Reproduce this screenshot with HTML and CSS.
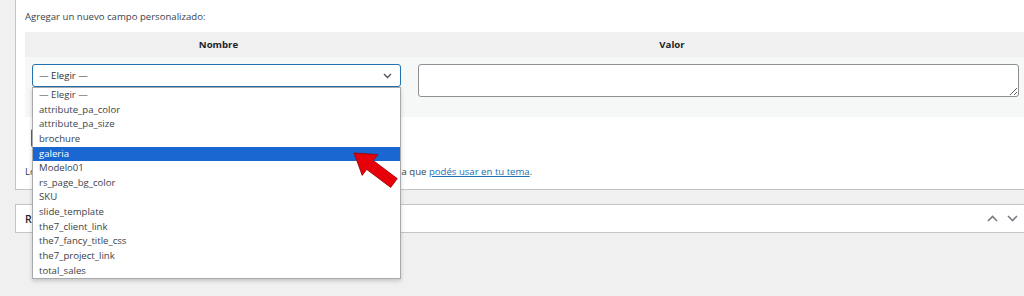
FILE: index.html
```html
<!DOCTYPE html>
<html lang="es">
<head>
<meta charset="utf-8">
<title>Campos personalizados</title>
<link rel="stylesheet" href="styles.css">
</head>
<body>
<div class="page">
  <div class="postbox custom-fields">
    <p class="add-label">Agregar un nuevo campo personalizado:</p>
    <div class="meta-table">
      <div class="meta-head">
        <div class="th th-name">Nombre</div>
        <div class="th th-value">Valor</div>
      </div>
      <div class="meta-row">
        <div class="select-wrap">
          <div class="select">
            <span>— Elegir —</span>
            <svg class="select-chevron" width="9" height="6" viewBox="0 0 9 6"><path d="M1 1l3.5 3.5L8 1" fill="none" stroke="#50575e" stroke-width="1.4"/></svg>
          </div>
          <ul class="options">
            <li>— Elegir —</li>
            <li>attribute_pa_color</li>
            <li>attribute_pa_size</li>
            <li>brochure</li>
            <li class="selected">galeria</li>
            <li>Modelo01</li>
            <li>rs_page_bg_color</li>
            <li>SKU</li>
            <li>slide_template</li>
            <li>the7_client_link</li>
            <li>the7_fancy_title_css</li>
            <li>the7_project_link</li>
            <li>total_sales</li>
          </ul>
        </div>
        <textarea class="value-input"></textarea>
      </div>
    </div>
    <button class="button">Agregar campo personalizado</button>
    <p class="help">Los campos personalizados pueden utilizarse para agregar metadatos a cada entrada que <a href="#">podés usar en tu tema</a>.</p>
  </div>
  <div class="postbox collapsed">
    <h2 class="box-title">Revisiones</h2>
    <div class="handles">
      <span class="handle"><svg width="11" height="7" viewBox="0 0 11 7"><path d="M1 6l4.5-4.5L10 6" fill="none" stroke="#787c82" stroke-width="1.6"/></svg></span>
      <span class="handle"><svg width="11" height="7" viewBox="0 0 11 7"><path d="M1 1l4.5 4.5L10 1" fill="none" stroke="#787c82" stroke-width="1.6"/></svg></span>
    </div>
  </div>
</div>
<svg class="annotation-arrow" width="1024" height="296" viewBox="0 0 1024 296">
  <polygon points="354,153 377.8,154.6 373.3,160.6 397.3,178.6 390.7,187.4 366.7,169.4 362.2,175.4" fill="#e5000a" stroke="#9c0000" stroke-width="0.8" stroke-linejoin="round"/>
</svg>
</body>
</html>
```

FILE: styles.css
```css
html, body {
  margin: 0;
  background: #f0f0f1;
  overflow: hidden;
}
body {
  position: relative;
  width: 1024px;
  height: 296px;
  font-family: "Open Sans", "Liberation Sans", sans-serif;
  font-size: 9.6px;
  color: #3c434a;
}
.page {
  padding-left: 15px;
}
.postbox {
  box-sizing: border-box;
  width: 1013px;
  background: #fff;
  border: 1px solid #c3c4c7;
}
.custom-fields {
  border-top: 0;
  height: 190px;
  padding: 10px 0 0 9px;
}
.add-label {
  margin: 0;
  line-height: 14px;
  color: #3c434a;
}
.meta-table {
  margin-top: 8px;
  background: #f6f7f7;
}
.meta-head {
  display: grid;
  grid-template-columns: 387px 520px;
  height: 25px;
  align-items: center;
  background: #f0f0f1;
}
.th {
  text-align: center;
  font-weight: 700;
  color: #1d2327;
}
.meta-row {
  display: grid;
  grid-template-columns: 387px 601px;
  align-items: start;
  padding: 7px 0 20px;
}
.select-wrap {
  position: relative;
  padding-left: 7px;
}
.select {
  box-sizing: border-box;
  width: 369px;
  height: 23px;
  display: flex;
  align-items: center;
  justify-content: space-between;
  padding: 0 8px 0 6px;
  border: 1px solid #2271b1;
  border-radius: 3px;
  background: #fff;
  color: #2c3338;
}
.options {
  position: absolute;
  left: 7px;
  top: 23px;
  z-index: 5;
  box-sizing: border-box;
  width: 369px;
  margin: 0;
  padding: 0;
  list-style: none;
  background: #fff;
  border: 1px solid #a7aaad;
  box-shadow: 0 2px 4px rgba(0, 0, 0, 0.18);
}
.options li {
  height: 14.65px;
  line-height: 14.65px;
  padding-left: 6px;
  color: #3c434a;
}
.options li.selected {
  background: #1a67d1;
  color: #fff;
}
.value-input {
  box-sizing: border-box;
  width: 601px;
  height: 33px;
  margin: 0 0 0 6px;
  border: 1px solid #8c8f94;
  border-radius: 3px;
  background: #fff;
}
.button {
  display: block;
  box-sizing: border-box;
  height: 20px;
  margin: 11px 0 0 6px;
  padding: 0 8px;
  border: 1px solid #2271b1;
  border-radius: 3px;
  background: #f6f7f7;
  color: #2271b1;
  font: inherit;
}
.help {
  margin: 17px 0 0;
  line-height: 14px;
  color: #3c434a;
}
.help a {
  color: #2271b1;
  text-decoration: underline;
}
.collapsed {
  margin-top: 14px;
  height: 29px;
  display: flex;
  align-items: center;
  padding: 0 5px 0 9px;
}
.box-title {
  margin: 0;
  font-size: 10.5px;
  font-weight: 600;
  color: #1d2327;
}
.handles {
  margin-left: auto;
  display: flex;
}
.handle {
  width: 20px;
  height: 20px;
  display: flex;
  align-items: center;
  justify-content: center;
}
.annotation-arrow {
  position: absolute;
  left: 0;
  top: 0;
  z-index: 10;
  pointer-events: none;
}
```
